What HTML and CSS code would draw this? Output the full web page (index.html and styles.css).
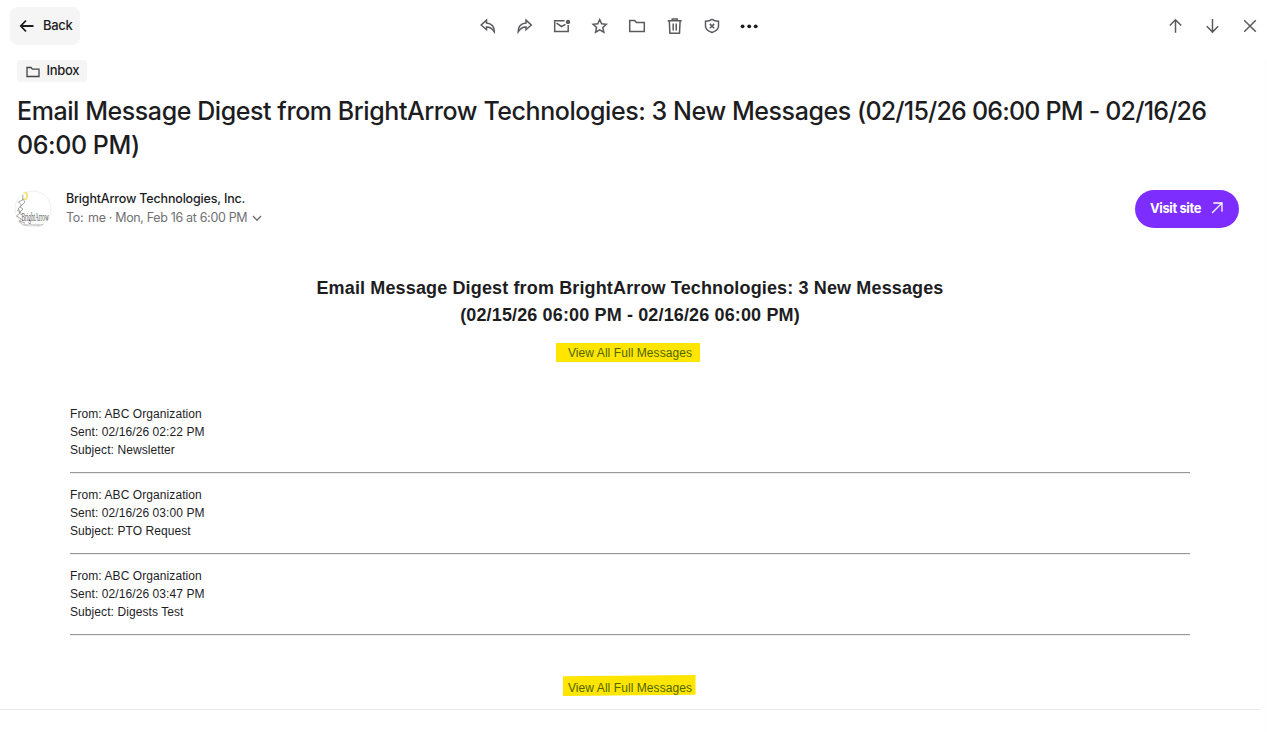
FILE: index.html
```html
<!DOCTYPE html>
<html lang="en">
<head>
<meta charset="utf-8">
<title>Email Message Digest</title>
<link rel="stylesheet" href="styles.css">
</head>
<body>
<div class="app">
  <header class="toolbar">
    <button class="back"><svg width="16" height="16" viewBox="0 0 16 16"><path d="M14.500 8H2M7 2.500 1.800 8 7 13.500"/></svg><span class="back-label">Back</span></button>
    <nav class="actions">
      <button class="tool" aria-label="Reply"><svg width="18" height="18" viewBox="0 0 18 18"><path d="M7.500 3.100 2.200 8l5.300 4.700V10c3.300-.2 5.500 1.200 7.800 4.900C15.500 10 12.800 6.500 7.500 5.900Z"/></svg></button>
      <button class="tool" aria-label="Forward"><svg width="18" height="18" viewBox="0 0 18 18"><path d="M10 3.100 15.300 8 10 12.700V10c-3.300-.2-5.500 1.200-7.800 4.900C2 10 4.700 6.500 10 5.900Z"/></svg></button>
      <button class="tool" aria-label="Mark as unread"><svg width="18" height="18" viewBox="0 0 18 18"><path d="M11.500 3.700H1.700v10.700h13.500V8M3.500 6.200l5 3.300 4-2.200"/><circle class="solid" cx="15" cy="4.900" r="2.200"/></svg></button>
      <button class="tool" aria-label="Star"><svg width="18" height="18" viewBox="0 0 18 18"><path d="m8.700 2.500 1.900 4.300 4.700.5-3.500 3.200 1 4.700-4.100-2.400-4.100 2.400 1-4.700-3.500-3.200 4.700-.5Z"/></svg></button>
      <button class="tool" aria-label="Move"><svg width="18" height="18" viewBox="0 0 18 18"><path d="M1.700 3.600h5l1.700 2h7.900v9H1.700Z"/></svg></button>
      <button class="tool" aria-label="Delete"><svg width="18" height="18" viewBox="0 0 18 18"><path d="M1.700 3.700h14M6.200 3.500V2h5v1.500M3.300 4l.6 12.200h9.600L14.100 4M7.200 6.500v7M10.200 6.500v7"/></svg></button>
      <button class="tool" aria-label="Mark as spam"><svg width="18" height="18" viewBox="0 0 18 18"><path d="M9 2.300c1.800 1.200 3.800 1.800 6.500 2v4.900c0 3.200-3.200 5.100-6.500 6.300-3.300-1.200-6.500-3.100-6.500-6.300V4.300C5.200 4.100 7.200 3.500 9 2.300ZM6.800 6.900l4.400 4.400M11.200 6.900l-4.400 4.400"/></svg></button>
      <button class="tool more" aria-label="More"><svg width="18" height="18" viewBox="0 0 18 18"><circle cx="2.600" cy="9.300" r="1.900"/><circle cx="9.200" cy="9.300" r="1.900"/><circle cx="15.700" cy="9.300" r="1.900"/></svg></button>
    </nav>
    <nav class="pager">
      <button class="tool" aria-label="Previous"><svg width="18" height="18" viewBox="0 0 18 18"><path d="M8.500 15.800V2.500M2.800 8.500l5.700-5.800 5.700 5.800"/></svg></button>
      <button class="tool" aria-label="Next"><svg width="18" height="18" viewBox="0 0 18 18"><path d="M8.500 2v13.300M2.800 9.300l5.700 5.800 5.700-5.800"/></svg></button>
      <button class="tool" aria-label="Close"><svg width="18" height="18" viewBox="0 0 18 18"><path d="m3.200 3.200 11.600 11.600M14.800 3.200 3.200 14.800"/></svg></button>
    </nav>
  </header>
  <main class="message">
    <div class="folder"><svg width="14" height="12" viewBox="0 0 14 12"><path d="M1 1.500h4l1.400 1.600H13v7.400H1Z"/></svg><span class="folder-label">Inbox</span></div>
    <h1 class="subject">Email Message Digest from BrightArrow Technologies: 3 New Messages <span class="dates">(02/15/26 06:00 PM - 02/16/26</span><br>06:00 PM)</h1>
    <section class="sender">
      <svg class="avatar" width="38" height="38" viewBox="0 0 38 38"><circle class="rim" cx="19" cy="19" r="18"/><path class="glow" d="M9 2.500c4-1.500 5.500 3 3 6.500L9.500 9"/><path class="figure" d="m9 5-.5 5-4 2 3 3-3.500 4 3 3-4.500 4 5 3-3 3 6 4M9 9l2 3-5 5 3 2-4 4 3 2M3 20l3 2M5 31l6 2"/><text class="brand" transform="translate(7.500 30.500) scale(.53 1.300)">BrightArrow</text><text class="brand-sub" transform="translate(10 36) scale(.9 1)">technologies</text></svg>
      <div class="sender-info">
        <div class="sender-name">BrightArrow Technologies, Inc.</div>
        <div class="sender-meta"><span class="meta-text">To:&nbsp;<span class="me"> me</span> · Mon, Feb 16 at 6:00 PM</span><svg width="10" height="7" viewBox="0 0 10 7"><path d="m1 1 4 4.300L9 1"/></svg></div>
      </div>
      <button class="visit"><span class="visit-label">Visit site</span><svg width="12" height="12" viewBox="0 0 12 12"><path d="M1 11 11 1M2.300 1H11v8.700"/></svg></button>
    </section>
    <article class="digest">
      <h2 class="heading">Email Message Digest from BrightArrow Technologies: 3 New Messages<br>(02/15/26 06:00 PM - 02/16/26 06:00 PM)</h2>
      <a class="view view-top">View All Full Messages</a>
      <div class="entries">
        <div class="entry">From: ABC Organization<br>Sent: 02/16/26 02:22 PM<br>Subject: Newsletter</div>
        <div class="entry">From: ABC Organization<br>Sent: 02/16/26 03:00 PM<br>Subject: PTO Request</div>
        <div class="entry">From: ABC Organization<br>Sent: 02/16/26 03:47 PM<br>Subject: Digests Test</div>
      </div>
      <a class="view view-bottom">View All Full Messages</a>
    </article>
  </main>
</div>
</body>
</html>
```
FILE: styles.css
```css
* { box-sizing: border-box; }
body { margin: 0; background: #fff; color: #1d1d1f; font-family: Inter, "Liberation Sans", sans-serif; overflow: hidden; }
svg { display: block; fill: none; stroke: currentColor; flex: none; }
button { font: inherit; color: inherit; border: 0; padding: 0; background: none; }
.app { height: 732px; }
.toolbar { display: flex; height: 60px; padding: 7px 0 0 10px; align-items: flex-start; }
.back { width: 70px; height: 38px; border-radius: 8px; background: #f5f5f5; display: flex; align-items: center; padding-left: 9px; gap: 8px; font-size: 13px; font-weight: 500; }
.back svg { stroke-width: 1.8; }
.back-label { letter-spacing: -0.300px; margin-top: -2px; }
.actions { display: flex; margin-left: 389px; }
.tool { width: 37.4px; height: 38px; display: flex; align-items: center; justify-content: center; color: #5b5b5f; }
.tool svg { stroke-width: 1.5; }
.tool .solid { fill: currentColor; stroke: none; }
.tool.more { color: #1d1d1f; }
.more svg { fill: currentColor; stroke: none; }
.pager { display: flex; margin-left: auto; margin-right: -2px; }
.message { height: 672px; border-right: 2px solid #fdfdfd; }
.folder { width: 70px; height: 22px; margin-left: 17px; border-radius: 4px; background: #f5f5f5; display: flex; align-items: center; gap: 7px; padding-left: 8.5px; font-size: 13px; font-weight: 500; }
.folder svg { margin-top: 1px; stroke-width: 1.3; color: #444; }
.folder-label { letter-spacing: -0.3px; margin-top: -2px; }
.subject { margin: 12px 0 0 17px; font-size: 25px; line-height: 34px; font-weight: 500; white-space: nowrap; letter-spacing: -0.43px; }
.dates { letter-spacing: -0.8px; }
.sender { display: flex; height: 38px; margin-top: 28px; padding: 0 26px 0 14px; }
.avatar { overflow: hidden; border-radius: 50%; }
.rim { stroke: #eee; }
.glow { stroke: #f2e37a; stroke-width: 2; }
.figure { stroke: #999; stroke-width: 0.9; }
.brand { fill: #555; stroke: none; font: 10px "Liberation Serif", serif; }
.brand-sub { fill: #999; stroke: none; font: 4px "Liberation Sans", sans-serif; }
.sender-info { margin: -1px 0 0 14px; font-size: 12.5px; line-height: 19px; white-space: nowrap; }
.sender-name { font-weight: 500; letter-spacing: -0.17px; }
.sender-meta { display: flex; align-items: center; gap: 5px; color: #717175; letter-spacing: -0.34px; }
.me { margin-left: -1.5px; }
.sender-meta svg { stroke-width: 1.4; margin-top: 2px; }
.visit { margin-left: auto; width: 104px; height: 38px; border-radius: 19px; background: #7d2eff; color: #fff; display: flex; align-items: center; padding: 0 0 3px 14.5px; gap: 9px; font-size: 13px; font-weight: 700; }
.visit-label { width: 52px; white-space: nowrap; letter-spacing: -0.400px; }
.visit svg { stroke-width: 1.3; }
.digest { display: flex; flex-direction: column; align-items: center; width: 1260px; height: 482px; border-bottom: 1px solid #ebebeb; padding-top: 47px; font-family: "Liberation Sans", Arial, sans-serif; }
.heading { margin: 0; font-size: 18px; line-height: 27px; text-align: center; letter-spacing: 0.14px; }
.view { display: flex; align-items: center; background: #ffe500; color: #4e6500; font-size: 12px; white-space: nowrap; letter-spacing: 0.07px; }
.view-top { width: 144px; height: 19px; margin: 14px 4px 0 0; padding-left: 12px; }
.view-bottom { width: 133px; height: 21px; margin: 27px 2px 0 0; padding: 4px 0 0 5.5px; clip-path: polygon(0 6%, 100% 0, 100% 94%, 0 100%); }
.entries { width: 1120px; margin-top: 43px; }
.entry { height: 81px; font-size: 12px; line-height: 18.200px; letter-spacing: 0.08px; background: linear-gradient(#999, #999) 0 67px / 100% 1px no-repeat, linear-gradient(#eee, #eee) 0 68px / 100% 1px no-repeat; }
```
